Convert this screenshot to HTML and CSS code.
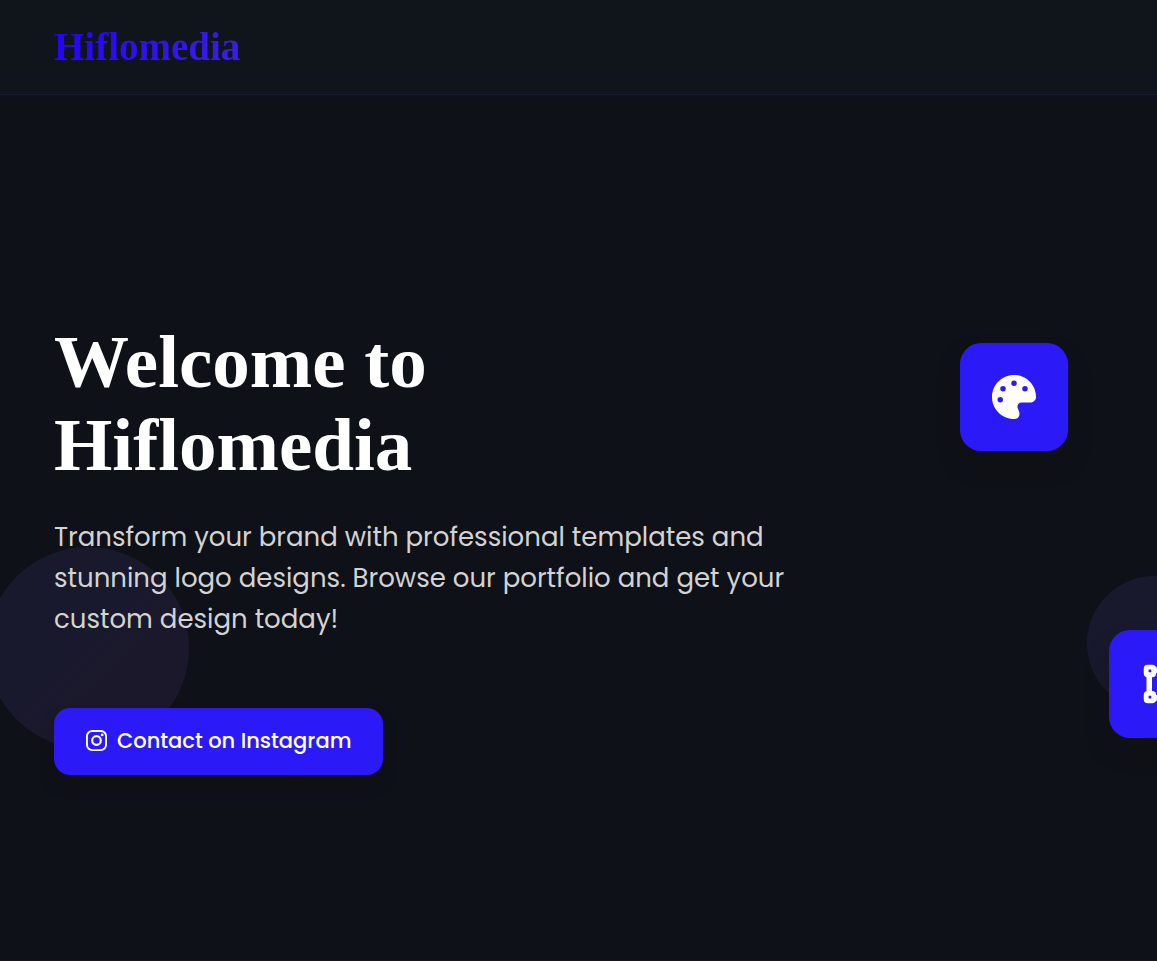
FILE: index.html
```html
<!DOCTYPE html>
<html lang="en">
<head>
<meta charset="utf-8">
<meta name="viewport" content="width=device-width, initial-scale=1">
<title>Hiflomedia</title>
<link rel="stylesheet" href="styles.css">
</head>
<body>
<header class="header">
  <a class="logo" href="#home">Hiflomedia</a>
</header>
<main class="hero" id="home">
  <div class="circle circle-left"></div>
  <div class="circle circle-right"></div>
  <div class="hero-content">
    <h1 class="title">Welcome to<br>Hiflomedia</h1>
    <p class="lead">Transform your brand with professional templates and<br>stunning logo designs. Browse our portfolio and get your<br>custom design today!</p>
    <a class="button" href="#contact">
      <svg class="button-icon" viewBox="0 32 448 448" aria-hidden="true">
        <rect x="20" y="52" width="408" height="408" rx="112" fill="none" stroke="currentColor" stroke-width="40"/>
        <circle cx="224" cy="256" r="92" fill="none" stroke="currentColor" stroke-width="46"/>
        <circle cx="344" cy="136" r="30" fill="currentColor"/>
      </svg>
      <span>Contact on Instagram</span>
    </a>
  </div>
  <div class="tile tile-palette">
    <svg class="tile-icon" viewBox="0 0 512 512" aria-hidden="true">
      <path fill="currentColor" d="M512 256c0 .9 0 1.8 0 2.7c-.4 36.5-33.6 61.3-70.1 61.3L344 320c-26.5 0-48 21.5-48 48c0 3.4 .4 6.7 1 9.9c2.1 10.2 6.5 20 10.8 29.9c6.1 13.8 12.1 27.5 12.1 42c0 31.8-21.6 60.7-53.4 62c-3.5 .1-7 .2-10.6 .2C114.6 512 0 397.4 0 256S114.6 0 256 0S512 114.6 512 256zM128 288a32 32 0 1 0 -64 0 32 32 0 1 0 64 0zm0-96a32 32 0 1 0 0-64 32 32 0 1 0 0 64zM288 96a32 32 0 1 0 -64 0 32 32 0 1 0 64 0zm96 96a32 32 0 1 0 0-64 32 32 0 1 0 0 64z"/>
    </svg>
  </div>
  <div class="tile tile-vector">
    <svg class="tile-icon" viewBox="-32 -32 512 512" aria-hidden="true">
      <g fill="none" stroke="currentColor" stroke-width="64">
        <path d="M72 64H376M72 384H376M64 72V376M384 72V376"/>
      </g>
      <g fill="#2b1af7" stroke="currentColor" stroke-width="56">
        <rect x="28" y="28" width="88" height="88" rx="18"/>
        <rect x="332" y="28" width="88" height="88" rx="18"/>
        <rect x="28" y="332" width="88" height="88" rx="18"/>
        <rect x="332" y="332" width="88" height="88" rx="18"/>
      </g>
    </svg>
  </div>
</main>
</body>
</html>
```
FILE: styles.css
```css
* { box-sizing: border-box; }

body {
  margin: 0;
  min-height: 100vh;
  display: flex;
  flex-direction: column;
  background: #0e1117;
  color: #fff;
  font-family: Poppins, Inter, sans-serif;
}

.header {
  display: flex;
  align-items: center;
  padding: 24px 54px;
  background: #10151b;
  border-bottom: 1px solid #161a2e;
}

.logo {
  font: bold 39px/46px "Liberation Serif", serif;
  text-decoration: none;
  color: transparent;
  background: linear-gradient(135deg, #2200ff, #3a22dd);
  background-clip: text;
  -webkit-background-clip: text;
}

.hero {
  position: relative;
  flex: 1;
  display: flex;
  align-items: center;
  padding: 40px 54px 0;
  overflow: hidden;
  border-bottom: 1px solid #17141a;
}

.hero-content {
  position: relative;
  display: flex;
  flex-direction: column;
  align-items: flex-start;
}

.title {
  margin: 0 0 31px;
  font: bold 75px/83px "Liberation Serif", serif;
}

.lead {
  margin: 0 0 68px;
  font-size: 26px;
  line-height: 41px;
  color: #d3d3d3;
}

.button {
  display: flex;
  align-items: center;
  gap: 10px;
  padding: 15px 32px 17px;
  border-radius: 16px;
  background: #2b1af7;
  box-shadow: 0 10px 16px -4px #11111199;
  color: #fff;
  font-size: 21px;
  font-weight: 500;
  line-height: 35px;
  text-decoration: none;
}

.button-icon {
  width: 21px;
  height: 21px;
}

.circle {
  position: absolute;
  border-radius: 50%;
  background: linear-gradient(135deg, #18192d 45%, #1c182b 65%);
}

.circle-left {
  left: -13px;
  bottom: 211px;
  width: 202px;
  height: 202px;
}

.circle-right {
  right: -65px;
  bottom: 249px;
  width: 135px;
  height: 135px;
}

.tile {
  position: absolute;
  display: grid;
  place-items: center;
  width: 108px;
  height: 108px;
  border-radius: 21px;
  background: #2b1af7;
  box-shadow: 0 14px 24px -6px #111111cc;
}

.tile-palette {
  right: 89px;
  top: 248px;
}

.tile-vector {
  right: -60px;
  top: 535px;
}

.tile-icon {
  width: 44px;
  height: 44px;
}
```
